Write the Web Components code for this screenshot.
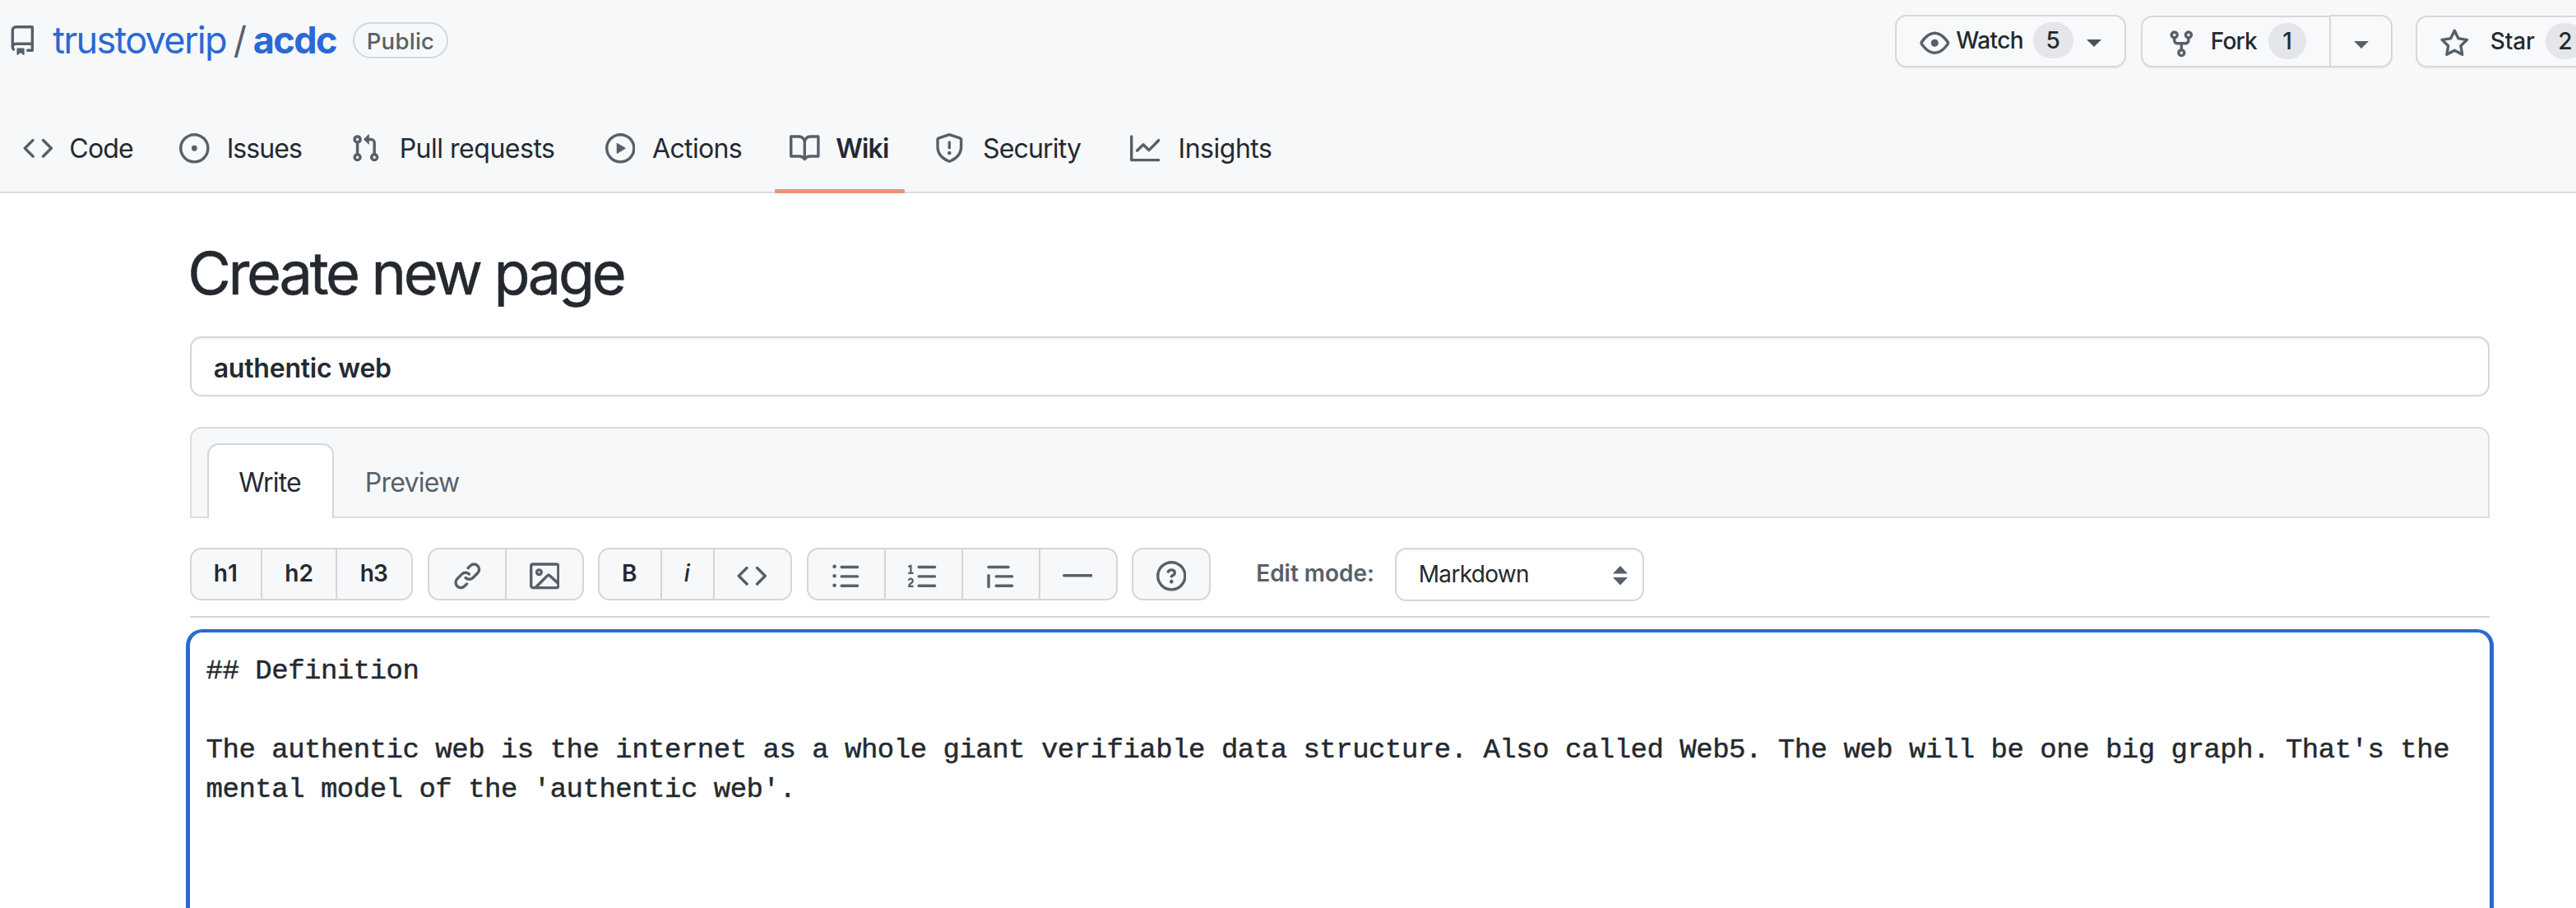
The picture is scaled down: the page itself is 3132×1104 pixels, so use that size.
<!DOCTYPE html>
<html lang="en">
<head>
<meta charset="utf-8">
<title>Create new page · trustoverip/acdc Wiki</title>
<style>
html,body{margin:0;padding:0;background:#fff}
body{width:3132px;height:1104px;overflow:hidden;font-family:Inter,"Liberation Sans",sans-serif;color:#24292f}
</style>
</head>
<body>
<wiki-page></wiki-page>
<script>
const ICONS={
repo:"M2 2.5A2.5 2.5 0 0 1 4.5 0h8.75a.75.75 0 0 1 .75.75v12.5a.75.75 0 0 1-.75.75h-2.5a.75.75 0 0 1 0-1.5h1.75v-2h-8a1 1 0 0 0-.714 1.7.75.75 0 1 1-1.072 1.05A2.495 2.495 0 0 1 2 11.5Zm10.5-1h-8a1 1 0 0 0-1 1v6.708A2.486 2.486 0 0 1 4.5 9h8ZM5 12.25a.25.25 0 0 1 .25-.25h3.5a.25.25 0 0 1 .25.25v3.25a.25.25 0 0 1-.4.2l-1.45-1.087a.249.249 0 0 0-.3 0L5.4 15.7a.25.25 0 0 1-.4-.2Z",
code:"M4.72 3.22a.75.75 0 011.06 1.06L2.06 8l3.72 3.72a.75.75 0 11-1.06 1.06L.47 8.53a.75.75 0 010-1.06l4.25-4.25zm6.56 0a.75.75 0 10-1.06 1.06L13.94 8l-3.72 3.72a.75.75 0 101.06 1.06l4.25-4.25a.75.75 0 000-1.06l-4.25-4.25z",
issue:"M8 9.5a1.5 1.5 0 100-3 1.5 1.5 0 000 3zM8 0a8 8 0 100 16A8 8 0 008 0zM1.5 8a6.5 6.5 0 1113 0 6.5 6.5 0 01-13 0z",
pull:"M7.177 3.073L9.573.677A.25.25 0 0110 .854v4.792a.25.25 0 01-.427.177L7.177 3.427a.25.25 0 010-.354zM3.75 2.5a.75.75 0 100 1.5.75.75 0 000-1.5zm-2.25.75a2.25 2.25 0 113 2.122v5.256a2.251 2.251 0 11-1.5 0V5.372A2.25 2.25 0 011.5 3.25zM11 2.5h-1V4h1a1 1 0 011 1v5.628a2.251 2.251 0 101.5 0V5A2.5 2.5 0 0011 2.5zm1 10.25a.75.75 0 111.5 0 .75.75 0 01-1.5 0zM3.75 12a.75.75 0 100 1.5.75.75 0 000-1.5z",
play:"M1.5 8a6.5 6.5 0 1113 0 6.5 6.5 0 01-13 0zM8 0a8 8 0 100 16A8 8 0 008 0zM6.379 5.227A.25.25 0 006 5.442v5.117a.25.25 0 00.379.214l4.264-2.559a.25.25 0 000-.428L6.379 5.227z",
book:"M0 1.75A.75.75 0 01.75 1h4.253c1.227 0 2.317.59 3 1.501A3.744 3.744 0 0111.006 1h4.245a.75.75 0 01.75.75v10.5a.75.75 0 01-.75.75h-4.507a2.25 2.25 0 00-1.591.659l-.622.621a.75.75 0 01-1.06 0l-.622-.621A2.25 2.25 0 005.258 13H.75a.75.75 0 01-.75-.75V1.75zm8.755 3a2.25 2.25 0 012.25-2.25H14.5v9h-3.757c-.71 0-1.4.201-1.992.572l.004-7.322zm-1.504 7.324l.004-5.073-.002-2.253A2.25 2.25 0 005.003 2.5H1.5v9h3.757a3.75 3.75 0 011.994.574z",
shield:"M7.467.133a1.75 1.75 0 011.066 0l5.25 1.68A1.75 1.75 0 0115 3.48V7c0 1.566-.32 3.182-1.303 4.682-.983 1.498-2.585 2.813-5.032 3.855a1.7 1.7 0 01-1.33 0c-2.447-1.042-4.049-2.357-5.032-3.855C1.32 10.182 1 8.566 1 7V3.48a1.75 1.75 0 011.217-1.667l5.25-1.68zm.61 1.429a.25.25 0 00-.153 0l-5.25 1.68a.25.25 0 00-.174.238V7c0 1.358.275 2.666 1.057 3.86.784 1.194 2.121 2.34 4.366 3.297a.2.2 0 00.154 0c2.245-.956 3.582-2.104 4.366-3.298C13.225 9.666 13.5 8.36 13.5 7V3.48a.25.25 0 00-.174-.237l-5.25-1.68zM9 10.5a1 1 0 11-2 0 1 1 0 012 0zm-.25-5.75a.75.75 0 10-1.5 0v3a.75.75 0 001.5 0v-3z",
graph:"M1.5 1.75a.75.75 0 00-1.5 0v12.5c0 .414.336.75.75.75h14.5a.75.75 0 000-1.5H1.5V1.75zm14.28 2.53a.75.75 0 00-1.06-1.06L10 7.94 7.53 5.47a.75.75 0 00-1.06 0L3.22 8.72a.75.75 0 001.06 1.06L7 7.06l2.47 2.47a.75.75 0 001.06 0l5.25-5.25z",
eye:"M1.679 7.932c.412-.621 1.242-1.75 2.366-2.717C5.175 4.242 6.527 3.5 8 3.5c1.473 0 2.824.742 3.955 1.715 1.124.967 1.954 2.096 2.366 2.717a.119.119 0 010 .136c-.412.621-1.242 1.75-2.366 2.717C10.825 11.758 9.473 12.5 8 12.5c-1.473 0-2.824-.742-3.955-1.715C2.92 9.818 2.09 8.69 1.679 8.068a.119.119 0 010-.136zM8 2c-1.981 0-3.67.992-4.933 2.078C1.797 5.169.88 6.423.43 7.1a1.619 1.619 0 000 1.798c.45.678 1.367 1.932 2.637 3.024C4.329 13.008 6.019 14 8 14c1.981 0 3.67-.992 4.933-2.078 1.27-1.091 2.187-2.345 2.637-3.023a1.619 1.619 0 000-1.798c-.45-.678-1.367-1.932-2.637-3.023C11.671 2.992 9.981 2 8 2zm0 8a2 2 0 100-4 2 2 0 000 4z",
fork:"M5 3.25a.75.75 0 11-1.5 0 .75.75 0 011.5 0zm0 2.122a2.25 2.25 0 10-1.5 0v.878A2.25 2.25 0 005.75 8.5h1.5v2.128a2.251 2.251 0 101.5 0V8.5h1.5a2.25 2.25 0 002.25-2.25v-.878a2.25 2.25 0 10-1.5 0v.878a.75.75 0 01-.75.75h-4.5A.75.75 0 015 6.25v-.878zm3.75 7.378a.75.75 0 11-1.5 0 .75.75 0 011.5 0zm3-8.75a.75.75 0 100-1.5.75.75 0 000 1.5z",
star:"M8 .25a.75.75 0 01.673.418l1.882 3.815 4.21.612a.75.75 0 01.416 1.279l-3.046 2.97.719 4.192a.75.75 0 01-1.088.791L8 12.347l-3.766 1.98a.75.75 0 01-1.088-.79l.72-4.194L.818 6.374a.75.75 0 01.416-1.28l4.21-.611L7.327.668A.75.75 0 018 .25zm0 2.445L6.615 5.5a.75.75 0 01-.564.41l-3.097.45 2.24 2.184a.75.75 0 01.216.664l-.528 3.084 2.769-1.456a.75.75 0 01.698 0l2.77 1.456-.53-3.084a.75.75 0 01.216-.664l2.24-2.183-3.096-.45a.75.75 0 01-.564-.41L8 2.694v.001z",
link:"M7.775 3.275a.75.75 0 001.06 1.06l1.25-1.25a2 2 0 112.83 2.83l-2.5 2.5a2 2 0 01-2.83 0 .75.75 0 00-1.06 1.06 3.5 3.5 0 004.95 0l2.5-2.5a3.5 3.5 0 00-4.95-4.95l-1.25 1.25zm-4.69 9.64a2 2 0 010-2.83l2.5-2.5a2 2 0 012.83 0 .75.75 0 001.06-1.06 3.5 3.5 0 00-4.95 0l-2.5 2.5a3.5 3.5 0 004.95 4.95l1.25-1.25a.75.75 0 00-1.06-1.06l-1.25 1.25a2 2 0 01-2.83 0z",
image:"M1.75 2.5a.25.25 0 00-.25.25v10.5c0 .138.112.25.25.25h.94a.76.76 0 01.03-.03l6.077-6.078a1.75 1.75 0 012.412-.06L14.5 10.31V2.75a.25.25 0 00-.25-.25H1.75zm12.5 11H4.81l5.048-5.047a.25.25 0 01.344-.009l4.298 3.889v.917a.25.25 0 01-.25.25zm1.75-.25V2.75A1.75 1.75 0 0014.25 1H1.75A1.75 1.75 0 000 2.75v10.5C0 14.216.784 15 1.75 15h12.5A1.75 1.75 0 0016 13.25zM5.5 6a.5.5 0 11-1 0 .5.5 0 011 0zM7 6a2 2 0 11-4 0 2 2 0 014 0z",
ul:"M2 4a1 1 0 100-2 1 1 0 000 2zm3.75-1.5a.75.75 0 000 1.5h8.5a.75.75 0 000-1.5h-8.5zm0 5a.75.75 0 000 1.5h8.5a.75.75 0 000-1.5h-8.5zm0 5a.75.75 0 000 1.5h8.5a.75.75 0 000-1.5h-8.5zM3 8a1 1 0 11-2 0 1 1 0 012 0zm-1 6a1 1 0 100-2 1 1 0 000 2z",
ol:"M2.003 2.5a.5.5 0 00-.723-.447l-1.003.5a.5.5 0 00.446.895l.28-.14V6H.5a.5.5 0 000 1h2.006a.5.5 0 100-1h-.503V2.5zM5 3.25a.75.75 0 01.75-.75h8.5a.75.75 0 010 1.5h-8.5A.75.75 0 015 3.25zm0 5a.75.75 0 01.75-.75h8.5a.75.75 0 010 1.5h-8.5A.75.75 0 015 8.25zm0 5a.75.75 0 01.75-.75h8.5a.75.75 0 010 1.5h-8.5a.75.75 0 01-.75-.75zM.924 10.32l.003-.004a.851.851 0 01.144-.153A.66.66 0 011.5 10c.195 0 .306.068.374.146a.57.57 0 01.128.376c0 .453-.269.682-.8 1.078l-.035.025C.692 11.98 0 12.495 0 13.5a.5.5 0 00.5.5h2.003a.5.5 0 000-1H1.146c.132-.197.351-.372.654-.597l.047-.035c.47-.35 1.156-.858 1.156-1.845 0-.365-.118-.744-.377-1.038-.268-.303-.658-.484-1.126-.484-.48 0-.84.202-1.068.392a1.858 1.858 0 00-.348.384l-.007.011-.002.004-.001.002-.001.001a.5.5 0 00.851.525z",
quote:"M1.75 2.5a.75.75 0 000 1.5h10.5a.75.75 0 000-1.5H1.75zm4 5a.75.75 0 000 1.5h8.5a.75.75 0 000-1.5h-8.5zm0 5a.75.75 0 000 1.5h8.5a.75.75 0 000-1.5h-8.5zM2.5 7.75a.75.75 0 00-1.5 0v6a.75.75 0 001.5 0v-6z",
hr:"M0 7.75A.75.75 0 01.75 7h14.5a.75.75 0 010 1.5H.75A.75.75 0 010 7.75z",
help:"M8 1.5a6.5 6.5 0 100 13 6.5 6.5 0 000-13zM0 8a8 8 0 1116 0A8 8 0 010 8zm9 3a1 1 0 11-2 0 1 1 0 012 0zM6.92 6.085c.081-.16.19-.299.34-.398.145-.097.371-.187.74-.187.28 0 .553.087.738.225A.613.613 0 019 6.25c0 .177-.04.264-.077.318a.956.956 0 01-.277.245c-.076.051-.158.1-.258.161l-.007.004a7.728 7.728 0 00-.313.195 2.416 2.416 0 00-.692.661.75.75 0 001.248.832.956.956 0 01.276-.245 6.3 6.3 0 01.26-.16l.006-.004c.093-.057.204-.123.313-.195.222-.149.487-.355.692-.662.214-.32.329-.702.329-1.15 0-.76-.36-1.348-.863-1.725A2.76 2.76 0 008 4c-.631 0-1.155.16-1.572.438-.413.276-.68.638-.849.977a.75.75 0 001.342.67z"
};
function define(name,html,after){
  customElements.define(name,class extends HTMLElement{
    connectedCallback(){
      if(this.shadowRoot)return;
      const t=document.createElement('template');
      t.innerHTML=typeof html==='function'?html(this):html;
      this.attachShadow({mode:'open'}).appendChild(t.content.cloneNode(true));
      if(after)after(this);
    }
  });
}
define('gh-icon',el=>`<style>:host{display:block;flex:none;width:36.6px;height:36.6px;color:#57606a}svg{display:block;width:100%;height:100%;fill:currentColor}</style>
<svg viewBox="0 0 16 16"><path fill-rule="evenodd" d="${ICONS[el.getAttribute('name')]}"/></svg>`);
define('gh-caret',`<style>:host{display:block;flex:none;width:18px;height:9px;color:#57606a}svg{display:block;fill:currentColor}</style><svg width="18" height="9" viewBox="0 0 18 9"><path d="M0 0h18L9 9z"/></svg>`);

/* A label whose inked width is set by its "w" attribute through tracking. */
const pen=document.createElement('canvas').getContext('2d');
define('fit-text',`<style>:host{display:block;flex:none;white-space:nowrap}span{display:block}</style><span><slot></slot></span>`,el=>{
  const s=getComputedStyle(el),text=el.textContent,target=+el.getAttribute('w');
  pen.font=`${s.fontStyle} ${s.fontWeight} ${s.fontSize} ${s.fontFamily}`;
  const m=pen.measureText(text),ink=m.actualBoundingBoxLeft+m.actualBoundingBoxRight;
  el.style.width=target+'px';
  const span=el.shadowRoot.querySelector('span');
  span.style.marginLeft=(m.actualBoundingBoxLeft-.3)+'px';
  if(text.length>1)span.style.letterSpacing=((target+.4-ink)/(text.length-1)).toFixed(3)+'px';
});

define('count-badge',`<style>:host{display:flex;flex:none;align-items:center;justify-content:center;height:44px;border-radius:22px;background:#e4e6ea;font-size:28px;font-weight:500;line-height:44px;margin:0 0 2px 13px;box-sizing:border-box}</style><slot></slot>`);

define('action-button',`<style>:host{display:flex;flex:none;align-items:center;box-sizing:border-box;height:64px;border:2px solid #d6d8da;border-radius:14px;background:#f7f9fb;box-shadow:0 2px 0 rgba(27,31,36,.04);font-size:28px;font-weight:500;line-height:44px}
:host([left]){border-radius:14px 0 0 14px;border-right:0}:host([right]){border-radius:0 14px 14px 0}
::slotted(fit-text){margin-bottom:1.6px}::slotted(gh-icon),::slotted(gh-caret){margin-top:5px}</style><slot></slot>`);

define('repo-title',`<style>:host{display:flex;align-items:center;height:98px;padding-left:9.4px}
.link{color:#2a69d3}.name{font-size:45px;line-height:60px}
.pill{display:flex;flex:none;align-items:center;box-sizing:border-box;width:116px;height:44px;margin-left:19px;padding:1px 0 0 17px;border:2px solid #d0d7de;border-radius:22px;color:#57606a}
.pill fit-text{font-size:27.5px;line-height:40px;font-weight:500}
.actions{display:flex;flex:none;align-self:flex-start;align-items:flex-start;padding-top:18px;margin-left:1759px}
.drop{margin-top:1px;height:63px}</style>
<gh-icon name="repo"></gh-icon>
<fit-text class="link name" w="210.5" style="margin-left:18.5px">trustoverip</fit-text>
<fit-text class="name" w="13" style="margin-left:10px;color:#57606a">/</fit-text>
<fit-text class="link name" w="100" style="margin-left:11px;margin-right:1px;font-weight:700">acdc</fit-text>
<span class="pill"><fit-text w="79">Public</fit-text></span>
<div class="actions">
<action-button style="width:281px"><gh-icon name="eye" style="margin-left:28px"></gh-icon><fit-text w="80" style="margin-left:8px">Watch</fit-text><count-badge style="width:49px">5</count-badge><gh-caret style="margin-left:16px;color:#4b5157"></gh-caret></action-button>
<action-button left class="drop" style="width:229px;margin-left:18px"><gh-icon name="fork" style="margin-left:29.4px"></gh-icon><fit-text w="55" style="margin-left:19px">Fork</fit-text><count-badge style="width:46px">1</count-badge></action-button>
<action-button right style="width:77px"><gh-caret style="margin-left:28px;margin-top:9px"></gh-caret></action-button>
<action-button class="drop" style="width:240px;margin-left:28px"><gh-icon name="star" style="margin-left:27.4px"></gh-icon><fit-text w="53" style="margin-left:26px">Star</fit-text><count-badge style="width:48px">2</count-badge></action-button>
</div>`);

define('nav-tab',el=>`<style>:host{display:flex;flex:none;align-items:center;position:relative;height:105px;font-size:32px;line-height:48px;color:#24292f}
:host([selected]){font-weight:600;padding:0 20px 0 18px}
:host([selected])::after{content:"";position:absolute;left:0;right:0;bottom:-2px;height:5px;background:#f09078;border-radius:1px}</style>
<gh-icon name="${el.getAttribute('icon')}" style="margin-right:${el.getAttribute('gap')}px"></gh-icon><slot></slot>`);

define('repo-nav',`<style>:host{display:flex;box-sizing:border-box;height:137px;padding-top:30px;border-bottom:2px solid #d8dee4}</style>
<nav-tab icon="code" gap="21" style="margin-left:28px"><fit-text w="76.4">Code</fit-text></nav-tab>
<nav-tab icon="issue" gap="23.4" style="margin-left:56px"><fit-text w="89">Issues</fit-text></nav-tab>
<nav-tab icon="pull" gap="24.9" style="margin-left:59.5px"><fit-text w="186">Pull requests</fit-text></nav-tab>
<nav-tab icon="play" gap="21" style="margin-left:61.8px"><fit-text w="108.4">Actions</fit-text></nav-tab>
<nav-tab selected icon="book" gap="20" style="margin-left:40.2px"><fit-text w="63.4">Wiki</fit-text></nav-tab>
<nav-tab icon="shield" gap="23.6" style="margin-left:36.3px"><fit-text w="118.5">Security</fit-text></nav-tab>
<nav-tab icon="graph" gap="24.4" style="margin-left:59px"><fit-text w="111">Insights</fit-text></nav-tab>`);

define('editor-tabs',`<style>:host{display:flex;box-sizing:border-box;height:111px;margin-top:37px;padding:18px 0 0 18.5px;border:2px solid #d8dee4;border-radius:14px 14px 0 0;background:#f6f8fa;font-size:32px;line-height:48px}
div{display:flex;align-items:center;box-sizing:border-box;height:91px}
.on{width:154.5px;padding:2px 0 0 37px;border:2px solid #d0d7de;border-bottom:0;border-radius:14px 14px 0 0;background:#fff;margin-bottom:-2px}
.off{padding:4px 0 0 40px;color:#57606a}</style>
<div class="on"><fit-text w="75.5">Write</fit-text></div><div class="off"><fit-text w="113">Preview</fit-text></div>`);

define('tool-group',`<style>:host{display:flex;flex:none;box-sizing:border-box;height:64px;border:2px solid #d3d6d9;border-radius:14px;background:#f6f8fa;overflow:hidden}</style><slot></slot>`);
define('tool-button',`<style>:host{display:flex;flex:none;align-items:center;justify-content:center;box-sizing:border-box;border-right:2px solid #d3d6d9;font-size:28px;font-weight:600;line-height:40px}
:host(:last-child){border-right:0}::slotted(gh-icon){margin-top:5px}::slotted(fit-text){margin-bottom:2.4px}</style><slot></slot>`);

define('mode-select',`<style>:host{display:flex;align-items:center;box-sizing:border-box;width:302.5px;height:65px;margin-left:27px;padding:0 18px 0 29px;border:2px solid #d0d7de;border-radius:14px;box-shadow:inset 0 2px 0 rgba(208,215,222,.2);font-size:28px;line-height:40px;justify-content:space-between}
svg{display:block;fill:#57606a;margin-top:2px}fit-text{margin-bottom:1px}</style>
<fit-text w="131">Markdown</fit-text><svg width="18" height="24" viewBox="0 0 18 24"><path d="M0 9.5h18L9 0zM0 14h18L9 23.5z"/></svg>`);

define('edit-toolbar',()=>{
  const T=(w,tw,t,st='')=>`<tool-button style="width:${w}px;${st}"><fit-text w="${tw}">${t}</fit-text></tool-button>`;
  const I=(w,n,st='')=>`<tool-button style="width:${w}px;${st}"><gh-icon name="${n}"></gh-icon></tool-button>`;
  const nudge='padding-right:2px';
  return `<style>:host{display:flex;height:83px;margin-top:36px;border-bottom:2px solid #d0d7de}
.mode{margin:11px 0 0 57.5px;font-size:28px;font-weight:600;line-height:40px;color:#57606a}</style>
<tool-group>${T(86,26,'h1',nudge)}${T(91,32,'h2')}${T(90,32,'h3')}</tool-group>
<tool-group style="margin-left:18px">${I(94,'link')}${I(92,'image')}</tool-group>
<tool-group style="margin-left:17px">${T(76,15.5,'B')}${T(64,8,'i','font-style:italic;font-weight:500')}${I(92,'code',nudge)}</tool-group>
<tool-group style="margin-left:18px">${I(94,'ul',nudge)}${I(94,'ol',nudge)}${I(94,'quote',nudge)}${I(92,'hr',nudge)}</tool-group>
<tool-group style="margin-left:17px">${I(92,'help')}</tool-group>
<fit-text class="mode" w="139.5">Edit mode:</fit-text><mode-select></mode-select>`;
});

define('text-editor',`<style>:host{display:block;box-sizing:border-box;height:380px;margin:14px -5px 0;padding:23px 18px 0 19.6px;border:solid #2a6ad2;border-width:4px 5px;border-radius:20px;background:#fff;
font:34px/48px "Liberation Mono",monospace;letter-spacing:-.495px;-webkit-text-stroke:.45px currentColor;white-space:pre-wrap}</style><slot></slot>`);

define('wiki-form',`<style>:host{display:block;width:2796px;margin-left:231px}
h1{margin:52px 0 32px;font-size:72px;font-weight:400;line-height:90px;padding-left:1.6px;-webkit-text-stroke:.5px currentColor}
.title{display:flex;align-items:center;box-sizing:border-box;height:73px;padding:4px 0 0 28px;border:2px solid #d0d7de;border-radius:14px;box-shadow:inset 0 2px 0 rgba(208,215,222,.2);font-size:32px;font-weight:600;line-height:44px}</style>
<h1><fit-text w="526">Create new page</fit-text></h1>
<div class="title"><fit-text w="214">authentic web</fit-text></div>
<editor-tabs></editor-tabs>
<edit-toolbar></edit-toolbar>
<text-editor>## Definition

The authentic web is the internet as a whole giant verifiable data structure. Also called Web5. The web will be one big graph. That's the mental model of the 'authentic web'.</text-editor>`);

define('wiki-page',`<style>:host{display:block;width:3132px;height:1104px;overflow:hidden}header{background:#f6f8fa;height:235px;overflow:hidden}</style>
<header><repo-title></repo-title><repo-nav></repo-nav></header><wiki-form></wiki-form>`);
</script>
</body>
</html>
